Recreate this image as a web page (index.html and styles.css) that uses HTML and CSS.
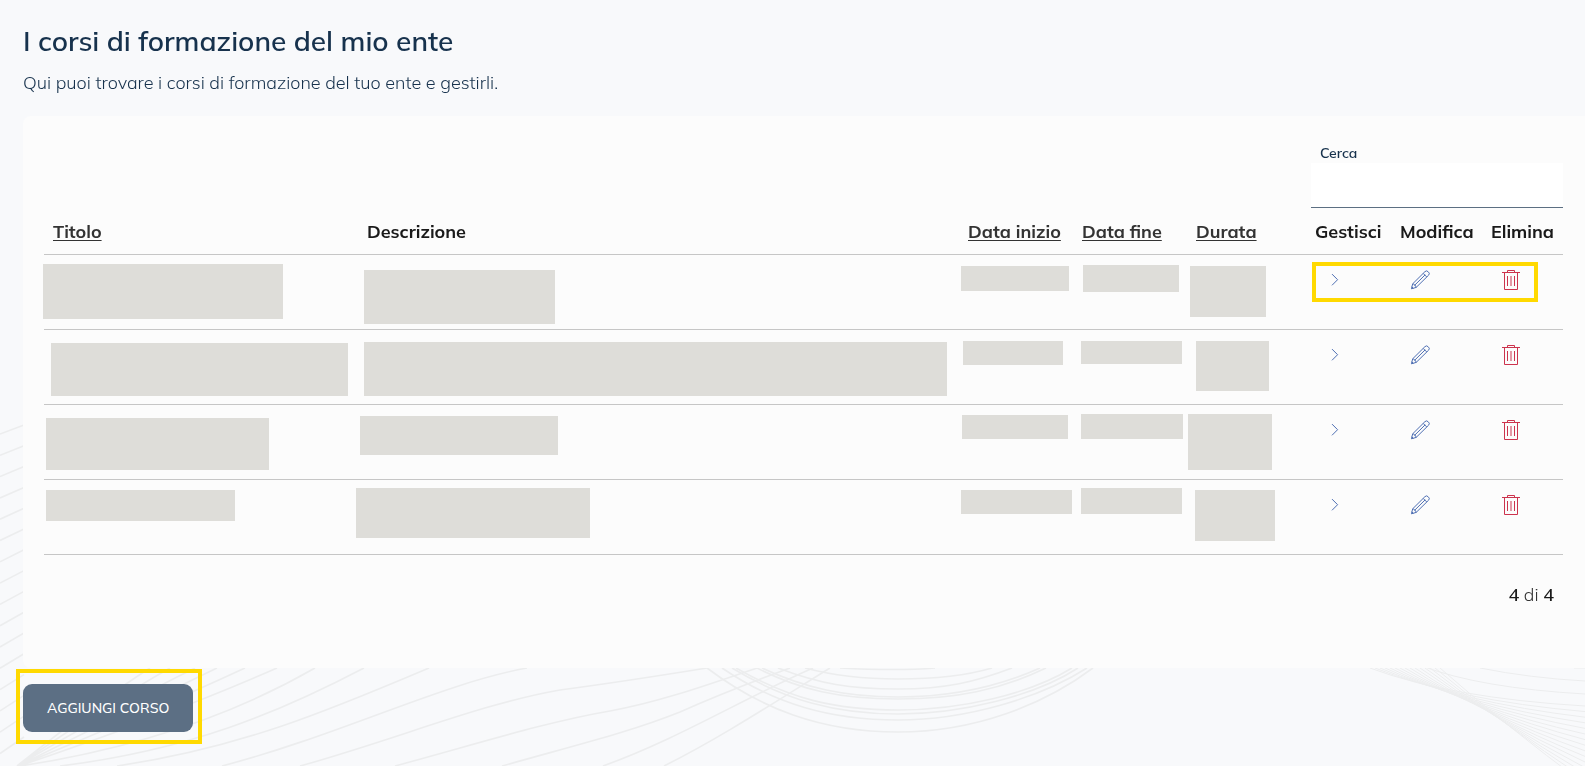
FILE: index.html
```
<!DOCTYPE html>
<html lang="it">
<head>
    <meta charset="UTF-8">
    <meta name="viewport" content="width=device-width, initial-scale=1.0">
    <title>I corsi di formazione del mio ente</title>
    <link rel="stylesheet" href="styles.css">
</head>
<body>

    <!-- Sfondo a onde -->
    <svg class="waves" viewBox="0 0 1585 766" preserveAspectRatio="xMidYMax slice" aria-hidden="true">
        <g id="leftWaves"></g>
        <g>
            <path d="M17 766Q100 700 150 668M17 766Q110 702 170 668M17 766Q120 705 195 668M18 766Q130 710 217 668M18 766Q150 712 245 668M19 766Q170 715 277 668M20 766Q190 740 315 668"/>
            <path d="M60 766C190 750 280 712 364 668"/>
            <path d="M117 766C240 748 330 710 429 668"/>
            <path d="M222 766C340 735 440 684 527 668"/>
            <path d="M300 766C400 738 480 704 560 690C620 682 670 674 707 668"/>
            <path d="M395 766C470 746 545 722 610 711C660 702 710 684 757 668"/>
            <path d="M502 766C580 744 630 732 680 712Q730 690 790 668"/>
            <path d="M603 766C680 738 740 700 813 668"/>
            <path d="M664 766C720 738 775 702 830 668"/>
        </g>
        <g>
            <path d="M707 668C760 708 820 732 898 732S1045 704 1093 668"/>
            <path d="M722 668C775 704 830 720 898 720S1040 698 1087 668"/>
            <path d="M732 668C785 700 835 714 898 714S1035 696 1078 668"/>
            <path d="M736 668C790 699 835 710 898 710S1030 694 1072 668"/>
            <path d="M757 668C800 690 840 699 898 699S1000 690 1046 668"/>
            <path d="M762 668C805 688 845 697 898 697S1000 686 1040 668"/>
            <path d="M778 668C820 684 850 689 898 689S975 682 1012 668"/>
            <path d="M805 668C835 676 865 679 898 679S965 676 992 668"/>
            <path d="M840 668Q898 671 935 668"/>
        </g>
        <g id="rightWaves"></g>
    </svg>

    <main class="page">
        <h1 class="page-title">I corsi di formazione del mio ente</h1>
        <p class="page-lead">Qui puoi trovare i corsi di formazione del tuo ente e gestirli.</p>

        <section class="card">
            <div class="search">
                <label for="search">Cerca</label>
                <input type="text" id="search">
            </div>

            <table class="courses">
                <colgroup>
                    <col class="col-title">
                    <col>
                    <col class="col-date">
                    <col class="col-date">
                    <col class="col-length">
                    <col class="col-manage">
                    <col class="col-edit">
                    <col class="col-delete">
                </colgroup>
                <thead>
                    <tr>
                        <th scope="col"><a href="#">Titolo</a></th>
                        <th scope="col">Descrizione</th>
                        <th scope="col"><a href="#">Data inizio</a></th>
                        <th scope="col"><a href="#">Data fine</a></th>
                        <th scope="col"><a href="#">Durata</a></th>
                        <th scope="col">Gestisci</th>
                        <th scope="col">Modifica</th>
                        <th scope="col">Elimina</th>
                    </tr>
                </thead>
                <tbody id="rows"></tbody>
            </table>

            <p class="count"><strong>4</strong> di <strong>4</strong></p>
        </section>

        <div class="actions">
            <button type="button" class="button">AGGIUNGI CORSO</button>
            <span class="highlight highlight-button"></span>
        </div>
    </main>

    <script>
        // Aree oscurate di ogni riga: [x, y, larghezza, altezza] rispetto alla cella
        const rows = [
            [[-1, 9, 240, 55], [6, 15, 191, 54], [2, 11, 108, 25], [10, 10, 96, 27], [3, 11, 76, 51]],
            [[7, 13, 297, 53], [6, 12, 583, 54], [4, 11, 100, 24], [8, 11, 101, 23], [9, 11, 73, 50]],
            [[2, 13, 223, 52], [2, 11, 198, 39], [3, 10, 106, 24], [8, 9, 102, 25], [1, 9, 84, 56]],
            [[2, 10, 189, 31], [-2, 8, 234, 50], [2, 10, 111, 24], [8, 8, 101, 26], [8, 10, 80, 51]]
        ];

        const icons = {
            manage: '<path d="M9 17.3l5.6-5.6L9 6.1"/>',
            edit: '<path d="M3.4 20.8l1.3-5L16.9 3.7a2.2 2.2 0 0 1 3.2 0l.4.4a2.2 2.2 0 0 1 0 3.2L8.2 19.4z"/><path d="M4.7 15.8c1.6.3 3 1.7 3.5 3.6M15.2 5.4l3.5 3.5M6.5 17.4L17.2 6.8M3.8 18.8l1.5 1.5"/>',
            remove: '<path d="M3 4.5h18M8.5 4V2.5h7V4M5.5 4.5v17h13v-17M8.5 8v10M15.5 8v10"/><path d="M11.5 8v10M12.5 8v10" stroke-opacity=".5"/>'
        };

        function actionCell(name, label, extra) {
            return `<td class="action"><button type="button" class="icon-button icon-${name}" aria-label="${label}">` +
                `<svg viewBox="0 0 24 24">${icons[name]}</svg></button>${extra || ''}</td>`;
        }

        document.getElementById('rows').innerHTML = rows.map((masks, i) => {
            const cells = masks.map(([x, y, w, h]) =>
                `<td><span class="mask" style="left:${x}px;top:${y}px;width:${w}px;height:${h}px"></span></td>`
            ).join('');
            const highlight = i === 0 ? '<span class="highlight highlight-row"></span>' : '';
            return `<tr>${cells}${actionCell('manage', 'Gestisci', highlight)}` +
                `${actionCell('edit', 'Modifica')}${actionCell('remove', 'Elimina')}</tr>`;
        }).join('');

        // --- Onde ai lati ---
        let left = '';
        for (let i = 0; i < 16; i++) {
            const y = 434 + i * 21.3;
            const rise = 9 + i * 0.5;
            left += `<path d="M0 ${y}Q12 ${y - rise / 2} 24 ${y - rise}"/>`;
        }
        document.getElementById('leftWaves').innerHTML = left;

        let right = '<path d="M1480 668Q1530 678 1585 681M1422 666Q1480 688 1585 694M1574 668H1585"/>';
        for (let i = 0; i < 15; i++) {
            right += `<path d="M${1370 + i * 5} 668Q${1450 + i * 4} ${698 + i * 2} 1585 ${706 + i * 5.6}"/>`;
        }
        document.getElementById('rightWaves').innerHTML = right;
    </script>
</body>
</html>
```

FILE: styles.css
```
* {
    box-sizing: border-box;
}
body {
    margin: 0;
    min-height: 100vh;
    background-color: #f8f9fb;
    font-family: Mulish, "Open Sans", sans-serif;
    font-size: 18px;
    line-height: 28px;
    color: #17324d;
}
.waves {
    position: fixed;
    top: 0;
    left: 0;
    width: 100%;
    height: 100%;
    z-index: -1;
    fill: none;
    stroke: #ecedee;
    stroke-width: 1.6;
}
#rightWaves {
    stroke-width: 1;
}
.page {
    padding: 23px 0 0 23px;
}
.page-title {
    margin: 0;
    font-size: 28px;
    line-height: 36px;
    font-weight: 600;
}
.page-lead {
    margin: 10px 0 19px;
    font-weight: 300;
}
.card {
    padding: 24px 22px 59px 21px;
    background-color: #fcfcfc;
    border-radius: 8px 0 0 8px;
}
.search {
    width: 252px;
    margin-left: auto;
}
.search label {
    display: block;
    padding: 4px 9px 0;
    font-size: 14px;
    line-height: 19px;
    font-weight: 600;
}
.search input {
    display: block;
    width: 100%;
    height: 45px;
    padding: 0 9px;
    border: 0;
    border-bottom: 1px solid #5c6f82;
    border-radius: 0;
    background-color: #fff;
    font: inherit;
    color: inherit;
    outline: none;
}
.courses {
    width: 100%;
    table-layout: fixed;
    border-collapse: separate;
    border-spacing: 0;
    color: #1a1a1a;
}
.col-title {
    width: 314px;
}
.col-date {
    width: 114px;
}
.col-length {
    width: 119px;
}
.col-manage {
    width: 85px;
}
.col-edit {
    width: 91px;
}
.col-delete {
    width: 81px;
}
.courses th {
    height: 47px;
    padding: 2px 0 0 9px;
    border-bottom: 1px solid #c6c6c6;
    text-align: left;
    font-weight: 700;
    white-space: nowrap;
}
.courses th a {
    color: #333;
    text-underline-offset: 2px;
}
.courses td {
    position: relative;
    height: 75px;
    padding: 0;
    border-bottom: 1px solid #c6c6c6;
    vertical-align: top;
}
.courses .action {
    padding: 13px 0 0 17px;
}
.mask {
    position: absolute;
    background-color: #deddd9;
}
.icon-button {
    display: block;
    width: 24px;
    height: 24px;
    padding: 0;
    border: 0;
    background: none;
    color: #4e6fb3;
    cursor: pointer;
}
.icon-button svg {
    display: block;
    width: 24px;
    height: 24px;
    fill: none;
    stroke: currentColor;
    stroke-width: 1;
}
.icon-remove {
    color: #cc334d;
}
.highlight {
    position: absolute;
    border: 4px solid #ffd900;
    pointer-events: none;
}
.highlight-row {
    top: 7px;
    left: 6px;
    width: 226px;
    height: 40px;
    z-index: 1;
}
.highlight-button {
    top: -15px;
    right: -9px;
    bottom: -12px;
    left: -7px;
}
.count {
    margin: 26px 9px 0 0;
    text-align: right;
    color: #333;
    font-weight: 300;
}
.count strong {
    font-weight: 600;
    color: #1a1a1a;
}
.actions {
    position: relative;
    width: fit-content;
    margin-top: 16px;
}
.button {
    display: block;
    height: 48px;
    padding: 0 24px;
    border: 0;
    border-radius: 9px;
    background-color: #5c6f84;
    color: #fff;
    font-family: inherit;
    font-size: 14px;
    font-weight: 500;
    cursor: pointer;
}
```
